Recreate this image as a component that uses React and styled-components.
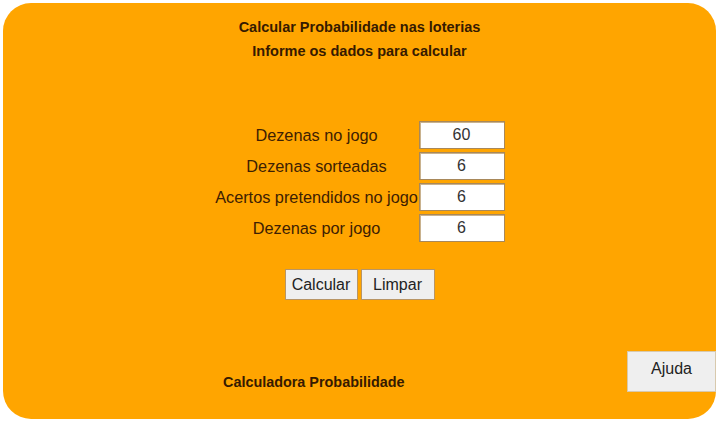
import React, { useState } from "react";
import styled, { createGlobalStyle } from "styled-components";

const GlobalStyle = createGlobalStyle`
  html, body {
    margin: 0;
    padding: 0;
    background: #ffffff;
  }
  body {
    font-family: "Liberation Sans", Arial, sans-serif;
  }
`;

const Panel = styled.div`
  box-sizing: border-box;
  width: 713px;
  height: 416px;
  margin: 3px 4px 3px 3px;
  background: #ffa500;
  border-radius: 28px;
  padding-top: 12px;
  display: flex;
  flex-direction: column;
  align-items: center;
  color: #361a00;
`;

const Heading = styled.div`
  font-size: 14.5px;
  font-weight: bold;
  line-height: 24px;
  text-align: center;
`;

const Form = styled.div`
  margin-top: 58px;
  display: grid;
  grid-template-columns: 204px 86px;
  grid-auto-rows: 28px;
  row-gap: 3px;
  align-items: center;
`;

const Label = styled.label`
  font-size: 16.3px;
  text-align: center;
  white-space: nowrap;
  color: #3d2003;
`;

const Field = styled.input`
  box-sizing: border-box;
  width: 86px;
  height: 28px;
  border: 1px solid #a8885a;
  box-shadow: inset 1px 1px 0 #c9b28e;
  background: #ffffff;
  text-align: center;
  font-family: "Liberation Sans", Arial, sans-serif;
  font-size: 16px;
  color: #333333;
  padding: 0;
  outline: none;
`;

const Buttons = styled.div`
  margin-top: 27px;
  display: flex;
  gap: 3px;
`;

const Button = styled.button`
  box-sizing: border-box;
  width: ${(p) => p.$w}px;
  height: ${(p) => p.$h}px;
  background: #efefef;
  border: 1px solid #b89565;
  font-family: "Liberation Sans", Arial, sans-serif;
  font-size: ${(p) => p.$size}px;
  color: #222222;
  padding: 0;
  cursor: pointer;
`;

const Footer = styled.div`
  align-self: stretch;
  margin-top: 51px;
  display: flex;
  justify-content: space-between;
  align-items: flex-start;
  padding-left: 220px;
`;

const FooterText = styled.div`
  margin-top: 23px;
  font-size: 14.4px;
  font-weight: bold;
  line-height: 16px;
`;

const HelpButton = styled(Button)`
  border-color: #d8c9ad;
  padding-bottom: 6px;
`;

const fields = [
  { key: "total", label: "Dezenas no jogo", value: "60" },
  { key: "drawn", label: "Dezenas sorteadas", value: "6" },
  { key: "hits", label: "Acertos pretendidos no jogo", value: "6" },
  { key: "perGame", label: "Dezenas por jogo", value: "6" },
];

export default function App() {
  const [values, setValues] = useState(
    Object.fromEntries(fields.map((f) => [f.key, f.value]))
  );

  return (
    <>
      <GlobalStyle />
      <Panel>
        <Heading>Calcular Probabilidade nas loterias</Heading>
        <Heading>Informe os dados para calcular</Heading>
        <Form>
          {fields.map((f) => (
            <React.Fragment key={f.key}>
              <Label htmlFor={f.key}>{f.label}</Label>
              <Field
                id={f.key}
                value={values[f.key]}
                onChange={(e) =>
                  setValues({ ...values, [f.key]: e.target.value })
                }
              />
            </React.Fragment>
          ))}
        </Form>
        <Buttons>
          <Button $w={73} $h={31} $size={16}>Calcular</Button>
          <Button $w={74} $h={31} $size={16}>Limpar</Button>
        </Buttons>
        <Footer>
          <FooterText>Calculadora Probabilidade</FooterText>
          <HelpButton $w={89} $h={41} $size={16}>Ajuda</HelpButton>
        </Footer>
      </Panel>
    </>
  );
}
